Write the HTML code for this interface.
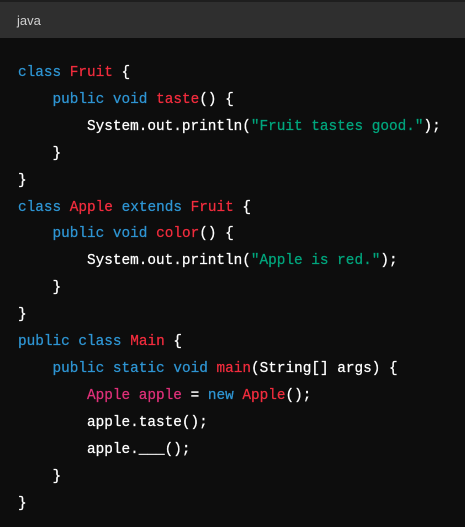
<!DOCTYPE html>
<html><head><meta charset="utf-8"><style>
html,body{margin:0;padding:0;background:#0d0d0d;width:465px;height:527px;overflow:hidden}
.hd{position:absolute;left:0;top:0;width:465px;height:38px;background:#2f2f2f;border-top:2px solid #1e1e1e;box-sizing:border-box}
.hd span{position:absolute;left:17px;top:11px;font:13px "Liberation Sans",sans-serif;color:#d0d0d0}
pre{position:absolute;left:18px;top:60px;margin:0;font:14.38px/26.9px "Liberation Mono",monospace;color:#fff;-webkit-text-stroke:0.25px currentColor}
.k{color:#2e95d3}.r{color:#f22c3d}.g{color:#00a67d}.p{color:#df3079}
</style></head><body>
<div class="hd"><span>java</span></div>
<pre><span class="k">class</span> <span class="r">Fruit</span> {
    <span class="k">public</span> <span class="k">void</span> <span class="r">taste</span>() {
        System.out.println(<span class="g">"Fruit tastes good."</span>);
    }
}
<span class="k">class</span> <span class="r">Apple</span> <span class="k">extends</span> <span class="r">Fruit</span> {
    <span class="k">public</span> <span class="k">void</span> <span class="r">color</span>() {
        System.out.println(<span class="g">"Apple is red."</span>);
    }
}
<span class="k">public</span> <span class="k">class</span> <span class="r">Main</span> {
    <span class="k">public</span> <span class="k">static</span> <span class="k">void</span> <span class="r">main</span>(String[] args) {
        <span class="p">Apple</span> <span class="p">apple</span> = <span class="k">new</span> <span class="r">Apple</span>();
        apple.taste();
        apple.___();
    }
}</pre>
</body></html>
